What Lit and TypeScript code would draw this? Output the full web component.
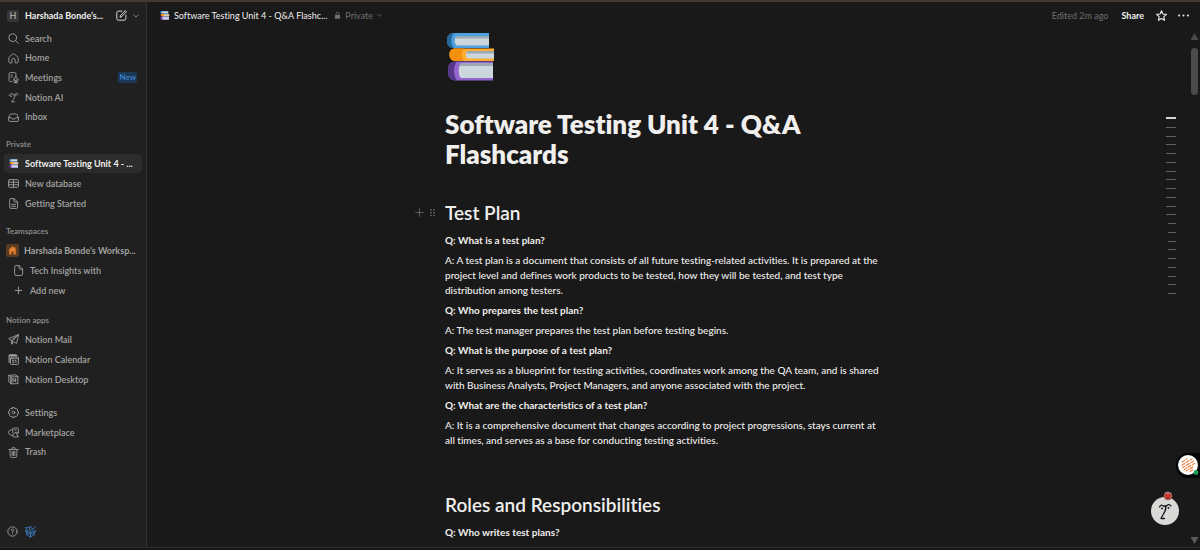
import { LitElement, html, css, svg } from "lit";
import { customElement, property } from "lit/decorators.js";

const stroke = (body: unknown) => html`<svg viewBox="0 0 20 20" fill="none" stroke="currentColor" stroke-width="1.6" stroke-linecap="round" stroke-linejoin="round" aria-hidden="true">${body}</svg>`;

const books = html`<svg viewBox="0 0 48 48" aria-hidden="true">
  <path d="M44 0H9C4 0 2 3 2 7.500S4 15 9 15H44z" fill="#4d9fe0"/>
  <path d="M9 0C4 0 2 3 2 7.500S4 15 9 15C5.500 12 5.500 3 9 0z" fill="#226699"/>
  <path d="M44 3H12C9 4 9 11.500 12 12.500H44z" fill="#ccd6dd"/><path d="M44 3H12l-1.500 2.500H44z" fill="#99aab5"/>
  <path d="M49 15.500H11C6 15.500 4.500 18 4.500 21.500S6 28 11 28H49z" fill="#ffac33"/>
  <path d="M19 15.500H10C6 15.500 4.500 18 4.500 21.500S6 28 10 28H19C16 25 16 18 19 15.500z" fill="#f4900c"/>
  <path d="M49 18H23C20 19 20 24.500 23 25.500H49z" fill="#ccd6dd"/><path d="M49 18H23l-2 2.500H49z" fill="#99aab5"/>
  <path d="M48 28.500H11C5 28.500 3 32 3 38S5 47.500 11 47.500H48z" fill="#9266cc"/>
  <path d="M12 28.500C5 28.500 3 32 3 38S5 47.500 12 47.500C8 43 8 33 12 28.500z" fill="#553788"/>
  <path d="M48 30.500H16C13 33 13 43 16 45H48z" fill="#ccd6dd"/><path d="M48 30.500H16l-1.500 2.500H48z" fill="#99aab5"/>
</svg>`;

const face = svg`<path d="M2 6.500C3.500 2.500 8 1.500 10 5M12 5C14 1.500 17.500 2 19 4.500M10.500 4.500C14 8 11 12 6.500 18H12"/><path d="M5.500 7v1M14.500 6v1" stroke-width="2.400"/>`;

const icons: Record<string, unknown> = {
  search: stroke(svg`<circle cx="8.500" cy="8.500" r="7"/><path d="M13.700 13.700L19 19"/>`),
  home: stroke(svg`<path d="M1.500 9.500C1.500 8 2 7.300 3 6.500L8.500 2Q10 1 11.500 2L17 6.500C18 7.300 18.500 8 18.500 9.500V16Q18.500 18 16.500 18H13V12.500Q13 9.800 10 9.800T7 12.500V18H3.500Q1.500 18 1.500 16z"/>`),
  meetings: stroke(svg`<path d="M7.500 17.500H4.500Q2 17.500 2 15V3.500Q2 1 4.500 1H12Q14.500 1 14.500 3.500V7M5.500 5.500H8M5.500 9H8"/><rect x="12" y="9" width="4.500" height="6.500" rx="2.200"/><path d="M9.500 13.500Q10 17.500 14.200 17.500T19 13.500M14.200 17.500V19.500M11 19.500H17.500"/>`),
  ai: stroke(face),
  inbox: stroke(svg`<path d="M1 10.500L3.500 5Q4.300 3.500 6 3.500H14Q15.700 3.500 16.500 5L19 10.500V15Q19 17.200 16.800 17.200H3.200Q1 17.200 1 15zM1 10.500H6Q6.500 13 10 13T14 10.500H19"/>`),
  table: stroke(svg`<rect x="1" y="3" width="18" height="14" rx="2"/><path d="M1 7.700H19M1 12.300H19M10 3V17"/>`),
  doc: stroke(svg`<path d="M3 3.500Q3 1 5.500 1H11L17.500 7.500V16.500Q17.500 19 15 19H5.500Q3 19 3 16.500zM11 1V5.500Q11 7.500 13 7.500H17.500M6.500 11.500H13.500M6.500 15H13.500"/>`),
  page: stroke(svg`<path d="M3 3.500Q3 1 5.500 1H11L17.500 7.500V16.500Q17.500 19 15 19H5.500Q3 19 3 16.500zM11 1V5.500Q11 7.500 13 7.500H17.500"/>`),
  plus: stroke(svg`<path d="M10 4V16M4 10H16"/>`),
  add: stroke(svg`<path d="M10 1.500V18.500M1.500 10H18.500"/>`),
  mail: stroke(svg`<path d="M18.500 1.500L1.300 8.200L5.800 11.500L7 18.300L10 14.200L15 16.800zM5.800 11.500L18.500 1.500M7 18.300L8 13L18.500 1.500"/>`),
  calendar: stroke(svg`<path d="M2 15V3.500Q2 1.500 4 1.500H14Q16 1.500 16 3.500M2 3H16" stroke-width="2"/><rect x="4.500" y="5.500" width="14.500" height="13.500" rx="2"/><path d="M4.500 8.500H19M8 11.500H10.500L9 13.500Q11 13.500 10.500 15.500Q9.500 16.500 8 15.800M13 12L14.500 11.200V16"/>`),
  desktop: stroke(svg`<path d="M2 2.500L5.500 5.500V18L2 14.500zM2 2.500L14 1.500L18 4.700V17.500L5.500 18V5.500L18 4.700"/><path d="M9 14.500V8L14 14.500V8" stroke-width="1.800"/>`),
  settings: stroke(svg`<path d="M8.200 1H11.800L12.600 3.300L15 2.500L17.500 5L16.700 7.400L19 8.200V11.800L16.700 12.600L17.500 15L15 17.500L12.600 16.700L11.800 19H8.200L7.400 16.700L5 17.500L2.500 15L3.300 12.600L1 11.800V8.200L3.300 7.400L2.500 5L5 2.500L7.400 3.300z"/><circle cx="10" cy="10" r="2.600"/>`),
  market: stroke(svg`<path d="M8.500 10.500V4Q8.500 2 10.500 2H17Q19 2 19 4V11.500L15.500 9.500M8.500 5H6Q1 6 1 10T6 15H8.500M8.500 15L13.500 9L19 18H9.500L8.500 15M12.500 5.500H15"/>`),
  trash: stroke(svg`<path d="M1.500 4.500H18.500M7 4.500V3Q7 1.200 8.300 1.200H11.700Q13 1.200 13 3V4.500M3.500 4.500L4.200 17Q4.400 19 6.200 19H13.800Q15.600 19 15.800 17L16.500 4.500M7.500 8V15.500M10 8V15.500M12.500 8V15.500"/>`),
  compose: stroke(svg`<path d="M11 2H4.500Q1.500 2 1.500 5V15.500Q1.500 18.500 4.500 18.500H15Q18 18.500 18 15.500V9M7.500 12.700L8.200 9.700L17 1L19 3L10.300 12z"/>`),
  chevron: stroke(svg`<path d="M3 6.500L10 13.500L17 6.500" stroke-width="2.800"/>`),
  lock: html`<svg viewBox="0 0 20 20" aria-hidden="true"><path d="M6 9V5a4 4 0 0 1 8 0V9" fill="none" stroke="currentColor" stroke-width="2.400"/><rect x="2.500" y="8.500" width="15" height="11" rx="2" fill="currentColor"/></svg>`,
  star: stroke(svg`<path d="M10 1.300L12.600 7.200L19 7.900L14.200 12.200L15.600 18.600L10 15.300L4.400 18.600L5.800 12.200L1 7.900L7.400 7.200z" stroke-width="2"/>`),
  more: html`<svg viewBox="0 0 20 20" fill="currentColor" aria-hidden="true"><circle cx="2" cy="10" r="1.800"/><circle cx="10" cy="10" r="1.800"/><circle cx="18" cy="10" r="1.800"/></svg>`,
  grip: html`<svg viewBox="0 0 20 20" fill="currentColor" aria-hidden="true"><path d="M5 2h3v3H5zM12 2h3v3h-3zM5 8.500h3v3H5zM12 8.500h3v3h-3zM5 15h3v3H5zM12 15h3v3h-3z"/></svg>`,
  help: stroke(svg`<circle cx="10" cy="10" r="8.500"/><path d="M7.500 8Q7.500 5.500 10 5.500T12.500 8Q12.500 9.500 10 10.500V11.500M10 14.200V14.400"/>`),
  gift: stroke(svg`<path d="M3 10.500V16L10 20L17 16V10.500M1 8.500L10 12.500L19 8.500M10 12.500V20M1 8.500L3 13L8 15L10 12.500L12 15L17 13L19 8.500M5 9L.5 2.500L5 3.500L7.500 1L9.500 10M12.500 8.500L13.500 5M15 6L18.500 1M11 4V.5"/>`),
  books,
  house: html`<svg viewBox="0 0 20 20" aria-hidden="true"><rect width="20" height="20" rx="3.500" fill="#5c3b23"/><path d="M10 3.500L3.500 9.700H5V16H8.500V12H11.500V16H15V9.700H16.500L14.500 7.800V4.500H13V6.300z" fill="#e07f2c"/></svg>`,
};

interface Item { icon: string; label: string; badge?: string; current?: boolean; strong?: boolean; nested?: boolean }

const sections: { title?: string; kind: string; items: Item[] }[] = [
  { kind: "top", items: [
    { icon: "search", label: "Search" }, { icon: "home", label: "Home" },
    { icon: "meetings", label: "Meetings", badge: "New" },
    { icon: "ai", label: "Notion AI" }, { icon: "inbox", label: "Inbox" } ] },
  { kind: "pages private", title: "Private", items: [
    { icon: "books", label: "Software Testing Unit 4 - ...", current: true },
    { icon: "table", label: "New database" }, { icon: "doc", label: "Getting Started" } ] },
  { kind: "pages", title: "Teamspaces", items: [
    { icon: "house", label: "Harshada Bonde’s Worksp...", strong: true },
    { icon: "page", label: "Tech Insights with", nested: true },
    { icon: "plus", label: "Add new", nested: true } ] },
  { kind: "pages apps", title: "Notion apps", items: [
    { icon: "mail", label: "Notion Mail" }, { icon: "calendar", label: "Notion Calendar" },
    { icon: "desktop", label: "Notion Desktop" } ] },
  { kind: "utility", items: [
    { icon: "settings", label: "Settings" }, { icon: "market", label: "Marketplace" },
    { icon: "trash", label: "Trash" } ] },
];

const shared = css`
  * { box-sizing: border-box; }
  svg { display: block; width: 100%; height: 100%; overflow: visible; }
  button { font: inherit; color: inherit; background: none; border: 0; padding: 0; margin: 0; cursor: pointer; }
  a { color: inherit; text-decoration: none; }
  .icon { flex: none; display: block; width: 11px; height: 11px; }
  .label { white-space: nowrap; }
`;

@customElement("side-bar")
class SideBar extends LitElement {
  static styles = [shared, css`
    :host { display: flex; flex-direction: column; width: 147px; flex: none; box-sizing: border-box; background: #202020;
      border-right: 1px solid #323232; color: #a3a3a1; font-size: 9px; font-weight: 600; line-height: 12px; }
    .head { display: flex; align-items: center; height: 27px; padding: 0 7px; color: #f0efed; }
    .avatar { flex: none; width: 12px; height: 12px; margin-right: 6px; border-radius: 2px; background: #373737; color: #a8a8a6; text-align: center; }
    .workspace { font-weight: 700; }
    .head .compose { margin: 0 6px 0 auto; }
    .head .caret { width: 6px; height: 6px; color: #9b9b99; }
    nav { flex: 1; padding: 0 4px; }
    section { display: flex; flex-direction: column; gap: 1px; }
    .pages { margin-top: 12px; }
    .private { margin-top: 11px; }
    .apps { margin-top: 14px; }
    .top { gap: 0; height: 98px; }
    .utility { gap: 0; height: 59px; margin-top: 14px; }
    .top a, .utility a { flex: 1; }
    h2 { margin: 0; padding: 0 2px; height: 15px; font-size: 8px; line-height: 12px; font-weight: 600; color: #92928f; }
    a { display: flex; align-items: center; height: 19px; padding: 0 5px 0 4px; border-radius: 4px; gap: 6px; }
    a.current { background: #2c2c2c; color: #f0efed; font-weight: 700; }
    a.current .icon { padding: 1px; }
    a.strong { padding: 0 4px 0 2px; gap: 5px; font-weight: 700; }
    a.strong .icon { width: 13px; height: 13px; }
    a.nested { padding-left: 9px; }
    .badge { margin-left: auto; padding: 0 1px; border-radius: 2px; background: #1c3857; color: #3d85d0; font-size: 8px; line-height: 11px; }
    footer { display: flex; gap: 7px; padding: 0 7px 10px; }
    footer .gift { color: #3a7cc4; }
  `];
  render() {
    return html`
      <div class="head">
        <span class="avatar">H</span>
        <button class="workspace label">Harshada Bonde’s...</button>
        <button class="icon compose" aria-label="New page">${icons.compose}</button>
        <button class="icon caret" aria-label="More new options">${icons.chevron}</button>
      </div>
      <nav>${sections.map(s => html`<section class=${s.kind}>
        ${s.title ? html`<h2>${s.title}</h2>` : ""}
        ${s.items.map(i => html`<a href="#" class=${[i.current && "current", i.strong && "strong", i.nested && "nested"].filter(Boolean).join(" ")}>
          <span class="icon">${icons[i.icon]}</span><span class="label">${i.label}</span>
          ${i.badge ? html`<span class="badge">${i.badge}</span>` : ""}</a>`)}
      </section>`)}</nav>
      <footer>
        <button class="icon" aria-label="Help">${icons.help}</button>
        <button class="icon gift" aria-label="What’s new">${icons.gift}</button>
      </footer>`;
  }
}

@customElement("top-bar")
class TopBar extends LitElement {
  static styles = [shared, css`
    :host { display: flex; align-items: center; flex: none; height: 27px; padding: 0 11px 0 13px; font-size: 9px; line-height: 12px; color: #f0efed; }
    .crumb { display: flex; align-items: center; gap: 5px; }
    .crumb .icon { width: 9px; height: 9px; }
    .privacy { display: flex; align-items: center; gap: 4px; margin-left: 7px; color: #6f6f6d; }
    .privacy .icon { width: 7px; height: 7px; }
    .privacy .caret { width: 5px; height: 5px; }
    .tools { display: flex; align-items: center; margin-left: auto; }
    .edited { color: #6f6f6d; margin-right: 13px; }
    .share { font-weight: 700; margin-right: 12px; }
    .star { margin-right: 11px; }
  `];
  render() {
    return html`
      <a class="crumb" href="#"><span class="icon">${books}</span><span class="label">Software Testing Unit 4 - Q&amp;A Flashc...</span></a>
      <button class="privacy"><span class="icon">${icons.lock}</span>Private<span class="icon caret">${icons.chevron}</span></button>
      <div class="tools">
        <span class="edited">Edited 2m ago</span>
        <button class="share">Share</button>
        <button class="icon star" aria-label="Favorite">${icons.star}</button>
        <button class="icon" aria-label="More">${icons.more}</button>
      </div>`;
  }
}

@customElement("doc-page")
class DocPage extends LitElement {
  static styles = [shared, css`
    :host { display: block; flex: 1; min-width: 0; overflow: hidden; padding: 4px 40px 0 32px; color: #f0efed; font-size: 10px; font-weight: 500; line-height: 15px; }
    article { max-width: 438px; margin: 0 auto; }
    .cover { width: 48px; height: 48px; margin-bottom: 28px; }
    h1 { margin: 0 0 31px; font-size: 26px; line-height: 30px; font-weight: 800; }
    h2 { margin: 0; font-size: 19px; line-height: 25px; font-weight: 600; }
    .row { display: flex; align-items: center; margin: 0 0 8px; }
    .hover { margin-left: -30px; }
    .handles { display: flex; align-items: center; gap: 4px; width: 30px; color: #777775; }
    .handles .icon { width: 9px; height: 9px; }
    p { margin: 0 0 5px; }
    .q { font-weight: 700; }
    .gap { height: 39px; }
  `];
  render() {
    return html`<article>
      <div class="cover">${books}</div>
      <h1>Software Testing Unit 4 - Q&amp;A Flashcards</h1>
      <div class="row hover">
        <div class="handles"><button class="icon" aria-label="Add block">${icons.add}</button><button class="icon" aria-label="Drag block">${icons.grip}</button></div>
        <h2>Test Plan</h2>
      </div>
      <p class="q">Q: What is a test plan?</p>
      <p>A: A test plan is a document that consists of all future testing-related activities. It is prepared at the project level and defines work products to be tested, how they will be tested, and test type distribution among testers.</p>
      <p class="q">Q: Who prepares the test plan?</p>
      <p>A: The test manager prepares the test plan before testing begins.</p>
      <p class="q">Q: What is the purpose of a test plan?</p>
      <p>A: It serves as a blueprint for testing activities, coordinates work among the QA team, and is shared with Business Analysts, Project Managers, and anyone associated with the project.</p>
      <p class="q">Q: What are the characteristics of a test plan?</p>
      <p>A: It is a comprehensive document that changes according to project progressions, stays current at all times, and serves as a base for conducting testing activities.</p>
      <div class="gap"></div>
      <div class="row"><h2>Roles and Responsibilities</h2></div>
      <p class="q">Q: Who writes test plans?</p>
    </article>`;
  }
}

@customElement("app-root")
class AppRoot extends LitElement {
  @property({ type: Number }) outline = 21;
  static styles = [shared, css`
    :host { display: flex; flex-direction: column; height: 100vh; background: #191919; border-top: 2px solid #453a33; border-bottom: 2px solid #141414; box-sizing: border-box;
      font-family: Lato, "Open Sans", sans-serif; font-variant-ligatures: none; }
    .shell { flex: 1; display: flex; min-height: 0; border-bottom: 1px solid #2f2f2f; }
    main { position: relative; flex: 1; display: flex; flex-direction: column; min-width: 0; }
    .body { flex: 1; display: flex; min-height: 0; }
    .scroll { flex: none; display: flex; flex-direction: column; align-items: center; width: 11px; padding: 4px 0 3px; }
    .up, .down { width: 8px; height: 7px; background: #4b4b4b; clip-path: polygon(50% 0, 100% 100%, 0 100%); }
    .down { clip-path: polygon(0 0, 100% 0, 50% 100%); margin-top: auto; background: #5a5a5a; }
    .thumb { width: 7px; height: 47px; margin-top: 8px; border-radius: 4px; background: #4b4b4b; }
    .outline { position: absolute; top: 115px; right: 24px; height: 177px; display: flex; flex-direction: column; justify-content: space-between; align-items: flex-end; }
    .tick { width: 8px; height: 1px; background: #626260; }
    .tick.long { width: 10px; }
    .tick.active { height: 2px; background: #d5d4d2; }
    .ext { position: absolute; right: 0; bottom: 69px; width: 24px; height: 25px; padding: 2px; border-radius: 12px 0 0 12px; background: #050608; }
    .ext .disc { width: 21px; height: 21px; }
    .fab { position: absolute; right: 21px; bottom: 22px; width: 28px; height: 34px; }
  `];
  render() {
    return html`
      <div class="shell">
        <side-bar></side-bar>
        <main>
          <top-bar></top-bar>
          <div class="body">
            <doc-page></doc-page>
            <div class="scroll" aria-hidden="true"><span class="up"></span><span class="thumb"></span><span class="down"></span></div>
          </div>
          <div class="outline" aria-hidden="true">${Array.from({ length: this.outline }, (_, i) => html`<span class="tick ${i < 12 ? "long" : ""} ${i ? "" : "active"}"></span>`)}</div>
          <button class="ext" aria-label="Extension"><svg class="disc" viewBox="0 0 21 21">
            <circle cx="10" cy="10" r="10" fill="#fff"/>
            <g stroke="#e8894f" stroke-width="1.300" stroke-linecap="round" stroke-dasharray="3 1.800"><path d="M4 7L9 4M4 10L14 4M4.500 12.500L16 6M6 14.500L16.500 8.500M8 16L16 11.500M12 16.500L15 14.500"/></g>
            <circle cx="18" cy="17.500" r="2.400" fill="#18a058"/></svg></button>
          <button class="fab" aria-label="Notion AI"><svg viewBox="0 0 28 34">
            <circle cx="14" cy="20" r="14" fill="#d9d9d7"/>
            <g fill="none" stroke="#191919" stroke-width="1.300" stroke-linecap="round" stroke-linejoin="round"><path d="M8.500 16Q10 12.500 13 15.500M15 15.500Q18 12 20 15M14 14.500C16.500 18 13 21.500 10 27.500H13.500"/></g>
            <g fill="#191919"><circle cx="11" cy="17.500" r="1"/><circle cx="17.500" cy="17" r="1"/></g>
            <circle cx="17" cy="5" r="4" fill="#d94235" stroke="#777" stroke-width=".6"/><path d="M14.500 2Q17 0 19.500 2.500" stroke="#9a9a98" fill="none"/><path d="M15 4.800h1M18 4.800h1M15.500 7h3" stroke="#3b1512" fill="none"/>
          </svg></button>
        </main>
      </div>`;
  }
}
